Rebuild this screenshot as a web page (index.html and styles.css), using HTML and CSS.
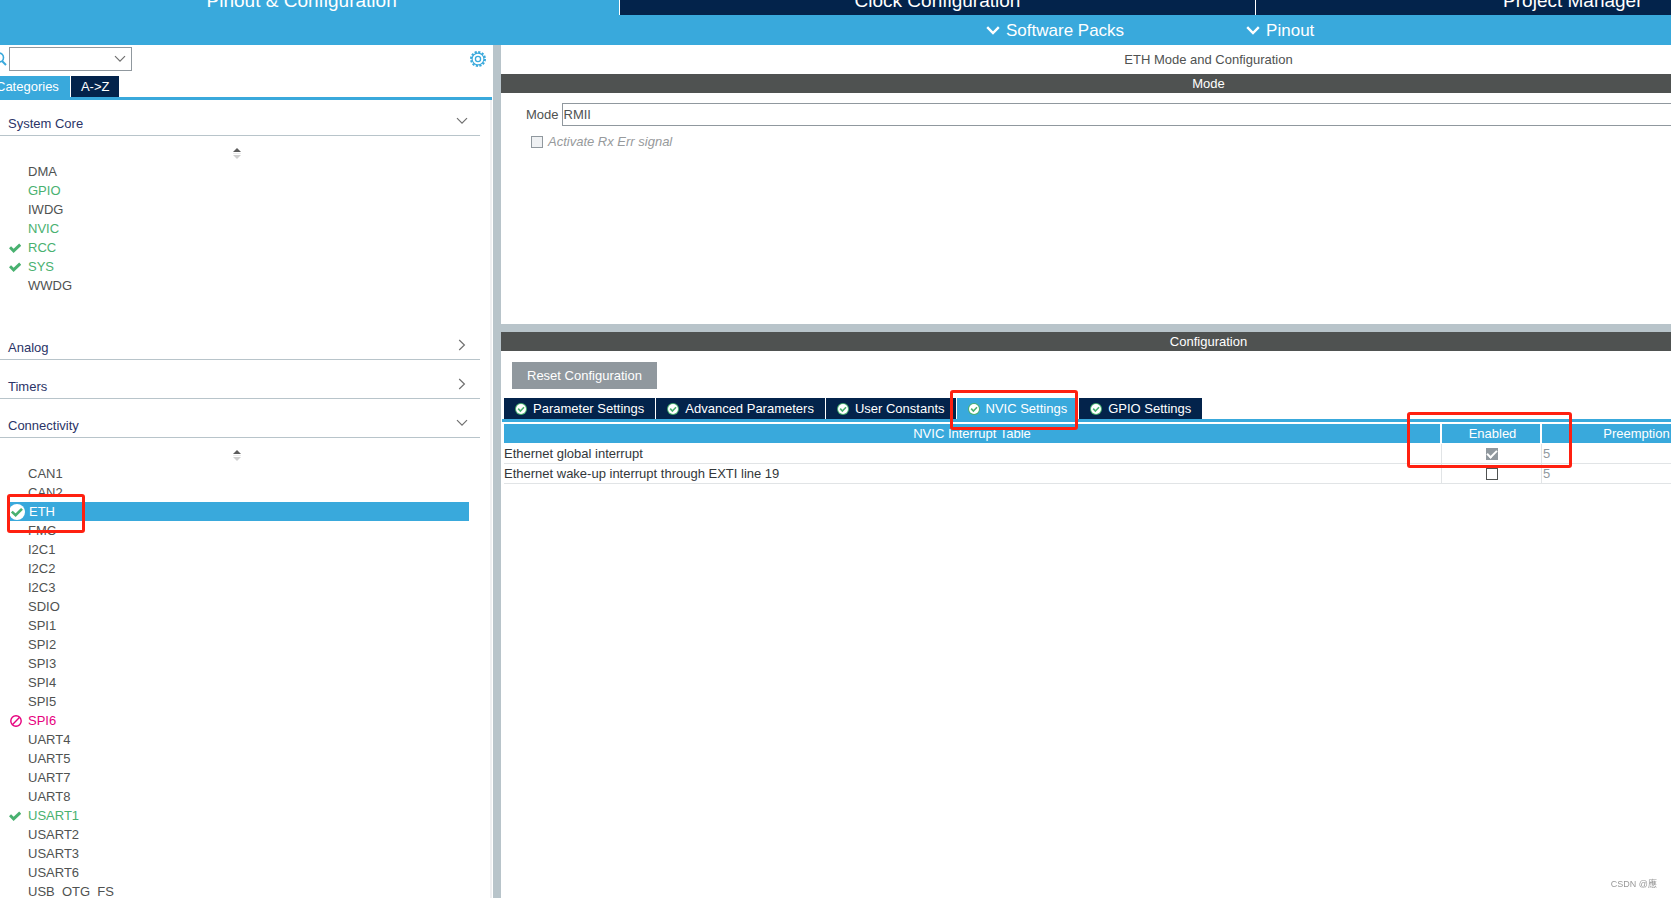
FILE: index.html
```html
<!DOCTYPE html>
<html lang="en">
<head>
<meta charset="utf-8">
<title>Pinout &amp; Configuration</title>
<link rel="stylesheet" href="styles.css">
</head>
<body>
<svg class="defs" aria-hidden="true">
  <symbol id="check" viewBox="0 0 12 10"><path d="M1 4.2 4.6 7.8 11.2 1.6" fill="none" stroke="currentColor" stroke-width="3"/></symbol>
  <symbol id="disc" viewBox="0 0 12 12"><circle cx="6" cy="6" r="6" fill="#49b170"/><circle cx="6" cy="6" r="5" fill="#fff"/><path d="M3.2 5.6 5.4 8 9 4.2" fill="none" stroke="#49b170" stroke-width="1.6"/></symbol>
  <symbol id="down" viewBox="0 0 12 8"><path d="M1 1.2 6 6.2 11 1.2" fill="none" stroke="currentColor" stroke-width="1.2"/></symbol>
  <symbol id="right" viewBox="0 0 8 12"><path d="M1.2 1 6.4 6 1.2 11" fill="none" stroke="currentColor" stroke-width="1.2"/></symbol>
  <symbol id="thick" viewBox="0 0 14 9"><path d="M1.2 1.2 7 7 12.8 1.2" fill="none" stroke="currentColor" stroke-width="2.4"/></symbol>
  <symbol id="sort" viewBox="0 0 8 11"><path d="M4 0 8 4H0z" fill="#5c5c5c"/><path d="M0 5h8v1H0z" fill="#ececec"/><path d="M0 7h8l-4 4z" fill="#cfcfcf"/></symbol>
</svg>
<div class="app">
  <nav class="main-tabs">
    <button class="main-tab active">Pinout &amp; Configuration</button>
    <button class="main-tab">Clock Configuration</button>
    <button class="main-tab">Project Manager</button>
  </nav>
  <div class="menu-bar">
    <button class="menu"><svg class="thick"><use href="#thick"/></svg>Software Packs</button>
    <button class="menu"><svg class="thick"><use href="#thick"/></svg>Pinout</button>
  </div>
  <div class="workspace">
    <aside class="sidebar">
      <div class="search">
        <svg class="lens" viewBox="0 0 14 14"><circle cx="6" cy="5.5" r="4.5" fill="none" stroke="#39a9dc" stroke-width="1.6"/><path d="M9 9l4 4" stroke="#39a9dc" stroke-width="2"/></svg>
        <span class="combo"><select class="combo-box" aria-label="Search"><option></option></select><svg class="down"><use href="#down"/></svg></span>
        <button class="gear" aria-label="Settings"><svg viewBox="0 0 16 16"><circle cx="8" cy="8" r="7" fill="none" stroke="#39a9dc" stroke-width="2" stroke-dasharray="2.2 1.465"/><circle cx="8" cy="8" r="5.9" fill="none" stroke="#39a9dc" stroke-width="1.1"/><circle cx="8" cy="8" r="2.6" fill="none" stroke="#39a9dc" stroke-width="1.3"/></svg></button>
      </div>
      <div class="view-tabs">
        <button class="view-tab active">Categories</button>
        <button class="view-tab">A-&gt;Z</button>
      </div>
      <div class="tree">
        <button class="group first">System Core<svg class="down"><use href="#down"/></svg></button>
        <div class="sorter"><svg class="sort"><use href="#sort"/></svg></div>
        <ul class="items core">
          <li class="item">DMA</li>
          <li class="item on">GPIO</li>
          <li class="item">IWDG</li>
          <li class="item on">NVIC</li>
          <li class="item on"><svg class="mark"><use href="#check"/></svg>RCC</li>
          <li class="item on"><svg class="mark"><use href="#check"/></svg>SYS</li>
          <li class="item">WWDG</li>
        </ul>
        <button class="group">Analog<svg class="right"><use href="#right"/></svg></button>
        <button class="group">Timers<svg class="right"><use href="#right"/></svg></button>
        <button class="group">Connectivity<svg class="down"><use href="#down"/></svg></button>
        <div class="sorter"><svg class="sort"><use href="#sort"/></svg></div>
        <ul class="items">
          <li class="item">CAN1</li>
          <li class="item">CAN2</li>
          <li class="item selected"><svg class="badge" viewBox="0 0 16 16"><circle cx="8" cy="8" r="8" fill="#fff"/><path d="M2.8 7.6 6.6 11.2 13 4.8" fill="none" stroke="#49b170" stroke-width="2.6"/></svg>ETH<span class="callout callout-item"></span></li>
          <li class="item">FMC</li>
          <li class="item">I2C1</li>
          <li class="item">I2C2</li>
          <li class="item">I2C3</li>
          <li class="item">SDIO</li>
          <li class="item">SPI1</li>
          <li class="item">SPI2</li>
          <li class="item">SPI3</li>
          <li class="item">SPI4</li>
          <li class="item">SPI5</li>
          <li class="item blocked"><svg class="ban" viewBox="0 0 12 12"><circle cx="6" cy="6" r="5.2" fill="none" stroke="currentColor" stroke-width="1.4"/><path d="M2.6 9.4 9.4 2.6" stroke="currentColor" stroke-width="1.4"/></svg>SPI6</li>
          <li class="item">UART4</li>
          <li class="item">UART5</li>
          <li class="item">UART7</li>
          <li class="item">UART8</li>
          <li class="item on"><svg class="mark"><use href="#check"/></svg>USART1</li>
          <li class="item">USART2</li>
          <li class="item">USART3</li>
          <li class="item">USART6</li>
          <li class="item">USB_OTG_FS</li>
        </ul>
      </div>
    </aside>
    <main class="detail">
      <section class="mode">
        <h1 class="title">ETH Mode and Configuration</h1>
        <h2 class="bar">Mode</h2>
        <div class="field">
          <label for="mode">Mode</label>
          <select id="mode" class="mode-box"><option>RMII</option></select>
        </div>
        <div class="option">
          <input type="checkbox" class="tick" id="rxerr" disabled>
          <label for="rxerr">Activate Rx Err signal</label>
        </div>
      </section>
      <section class="config">
        <h2 class="bar">Configuration</h2>
        <button class="reset">Reset Configuration</button>
        <div class="tabs">
          <button class="tab"><svg class="disc"><use href="#disc"/></svg>Parameter Settings</button>
          <button class="tab"><svg class="disc"><use href="#disc"/></svg>Advanced Parameters</button>
          <button class="tab"><svg class="disc"><use href="#disc"/></svg>User Constants</button>
          <button class="tab active"><svg class="disc"><use href="#disc"/></svg>NVIC Settings<span class="callout callout-tab"></span></button>
          <button class="tab"><svg class="disc"><use href="#disc"/></svg>GPIO Settings</button>
        </div>
        <table class="nvic">
          <colgroup><col><col class="col-enabled"><col class="col-priority"><col class="col-sub"></colgroup>
          <thead>
            <tr><th>NVIC Interrupt Table</th><th class="enabled">Enabled<span class="callout callout-enabled"></span></th><th>Preemption Priority</th><th>Sub Priority</th></tr>
          </thead>
          <tbody>
            <tr><td>Ethernet global interrupt</td><td class="center"><input type="checkbox" class="tick" aria-label="Enable Ethernet global interrupt" checked disabled></td><td class="value">5</td><td class="value">0</td></tr>
            <tr><td>Ethernet wake-up interrupt through EXTI line 19</td><td class="center"><input type="checkbox" class="tick" aria-label="Enable Ethernet wake-up interrupt"></td><td class="value">5</td><td class="value">0</td></tr>
          </tbody>
        </table>
      </section>
    </main>
  </div>
</div>
<div class="watermark">CSDN @應</div>
</body>
</html>
```
FILE: styles.css
```css
* { box-sizing: border-box; }

html, body { height: 100%; }

body {
  margin: 0;
  overflow: hidden;
  background: #fff;
  color: #4f5251;
  font: 13px/19px "Liberation Sans", "Noto Sans CJK TC", sans-serif;
}

button, select {
  margin: 0;
  padding: 0;
  border: 0;
  border-radius: 0;
  background: none;
  color: inherit;
  font: inherit;
}

h1, h2, ul { margin: 0; padding: 0; font: inherit; list-style: none; }
svg { flex: none; display: block; }
.defs { position: absolute; width: 0; height: 0; }

/* The application is larger than the viewport and shows its middle part. */
.app {
  display: flex;
  flex-direction: column;
  width: calc(100% + 261px);
  height: calc(100% + 13px);
  margin: -13px 0 0 -16px;
}

.main-tabs {
  display: grid;
  grid-template-columns: repeat(3, 1fr);
  margin-right: 26px;
}
.main-tab {
  height: 28px;
  border-left: 1px solid #fff;
  background: #03234b;
  color: #fff;
  font-size: 19px;
  line-height: 28px;
}
.main-tab.active { border-left: 0; background: #39a9dc; }

.menu-bar {
  display: flex;
  gap: 122px;
  height: 30px;
  padding-left: 1002px;
  background: #39a9dc;
  color: #fff;
}
.menu { display: flex; align-items: center; gap: 6px; font-size: 17px; }
.thick { width: 14px; height: 9px; }

.workspace { display: flex; flex: 1; min-height: 0; }

.sidebar {
  flex: none;
  width: 517px;
  border-right: 8px solid #b8c4ca;
  overflow: hidden;
}
.search { display: flex; align-items: center; height: 31px; padding: 0 7px 3px 9px; }
.lens { width: 14px; height: 14px; margin-right: 2px; }
.search .combo { position: relative; width: 123px; height: 24px; }
.combo-box { display: block; width: 100%; height: 100%; border: 1px solid #90989e; background: #fff; appearance: none; }
.down { width: 12px; height: 8px; color: #707070; }
.right { width: 8px; height: 12px; color: #707070; }
.combo .down { position: absolute; right: 6px; top: 8px; pointer-events: none; }
.gear { width: 16px; height: 16px; margin: 0 0 0 auto; }
.gear svg { width: 16px; height: 16px; }

.view-tabs { display: flex; gap: 1px; margin-right: 1px; border-bottom: 3px solid #39a9dc; }
.view-tab { height: 21px; padding: 0 10px; background: #03234b; color: #fff; }
.view-tab.active { padding: 0 11px 0 12px; background: #39a9dc; }

.tree { height: 100%; margin-right: 1px; border-right: 2px solid #f0f0f2; }
.group {
  display: flex;
  justify-content: space-between;
  align-items: center;
  width: 496px;
  height: 39px;
  padding: 14px 12px 0 24px;
  border-bottom: 1px solid #b8c4ca;
  color: #2b3467;
  text-align: left;
}
.group.first { height: 36px; padding-top: 11px; }
.group svg { margin-bottom: 4px; }
.group .right { margin-right: 2px; }
.sorter { height: 26px; padding: 12px 0 0 249px; }
.sort { width: 8px; height: 11px; }
.items { width: 460px; margin-left: 25px; }
.items.core { margin-bottom: 26px; }
.item { position: relative; display: flex; align-items: center; height: 19px; padding-left: 19px; }
.item.on { color: #49b170; }
.item.blocked { color: #e6007e; }
.item.selected { padding-left: 20px; background: #39a9dc; color: #fff; }
.mark { width: 12px; height: 10px; margin: 0 7px 0 -19px; }
.ban { width: 12px; height: 12px; margin: 0 6px 0 -18px; }
.badge { width: 16px; height: 16px; margin: 0 4px 0 -20px; }

.detail { flex: 1; display: flex; flex-direction: column; min-width: 0; }
.title { height: 29px; line-height: 29px; text-align: center; }
.bar { height: 19px; background: #4f5251; color: #fff; text-align: center; }
.mode { height: 287px; border-bottom: 8px solid #b8c4ca; }
.field { display: flex; align-items: center; gap: 3px; padding: 10px 0 0 25px; }
.mode-box {
  flex: 1;
  height: 23px;
  padding: 0 1px;
  border: 1px solid #90989e;
  background: #fff;
  appearance: none;
}
.option {
  display: flex;
  align-items: center;
  gap: 5px;
  padding: 6px 0 0 30px;
  color: #979a9c;
  font-style: italic;
}

.tick {
  flex: none;
  display: block;
  width: 12px;
  height: 12px;
  margin: 0;
  border: 1px solid #4f5251;
  background: #fff;
  appearance: none;
}
.tick:disabled { border-color: #90989e; background: #eff1f3; }
.tick:checked { display: grid; place-items: center; background: #90989e; }
.tick:checked::before {
  content: "";
  width: 8px;
  height: 4px;
  margin-bottom: 2px;
  border: solid #fff;
  border-width: 0 0 2px 2px;
  rotate: -45deg;
}

.config { flex: 1; padding-bottom: 10px; }
.reset { display: block; margin: 11px 0 9px 11px; padding: 4px 15px; background: #90989e; color: #fff; }
.tabs { display: flex; gap: 1px; margin-left: 1px; padding-left: 2px; border-bottom: 3px solid #39a9dc; }
.tab {
  position: relative;
  display: flex;
  align-items: center;
  gap: 6px;
  height: 21px;
  padding: 0 11px;
  background: #03234b;
  color: #fff;
}
.tab.active { background: #39a9dc; }
.disc { width: 12px; height: 12px; }

.nvic {
  width: calc(100% - 3px);
  margin: 2px 0 0 3px;
  border-collapse: separate;
  border-spacing: 0;
  table-layout: fixed;
  color: #33373a;
}
.col-enabled { width: 100px; }
.col-priority { width: 235px; }
.col-sub { width: 139px; }
.nvic th {
  position: relative;
  height: 20px;
  padding: 0;
  border-right: 2px solid #fff;
  border-bottom: 1px solid #fff;
  background: #39a9dc;
  color: #fff;
  font-weight: normal;
}
.nvic td { height: 20px; padding: 0; border-right: 1px solid #e1e4e6; border-bottom: 1px solid #e1e4e6; }
.nvic .enabled { padding-left: 3px; }
.center .tick { margin: 0 auto; }
.nvic .value { padding-left: 1px; color: #90989e; }

/* Red highlight frames drawn over the content. */
.callout { position: absolute; z-index: 1; border: 3px solid #ff2010; border-radius: 3px; pointer-events: none; }
.callout-item { left: -2px; top: -8px; width: 78px; height: 39px; }
.callout-tab { left: -7px; right: 0; top: -8px; height: 40px; }
.callout-enabled { left: -35px; right: -32px; top: -12px; height: 56px; }

.watermark { position: fixed; right: 14px; bottom: 4px; color: #999; font-size: 9px; }
```
